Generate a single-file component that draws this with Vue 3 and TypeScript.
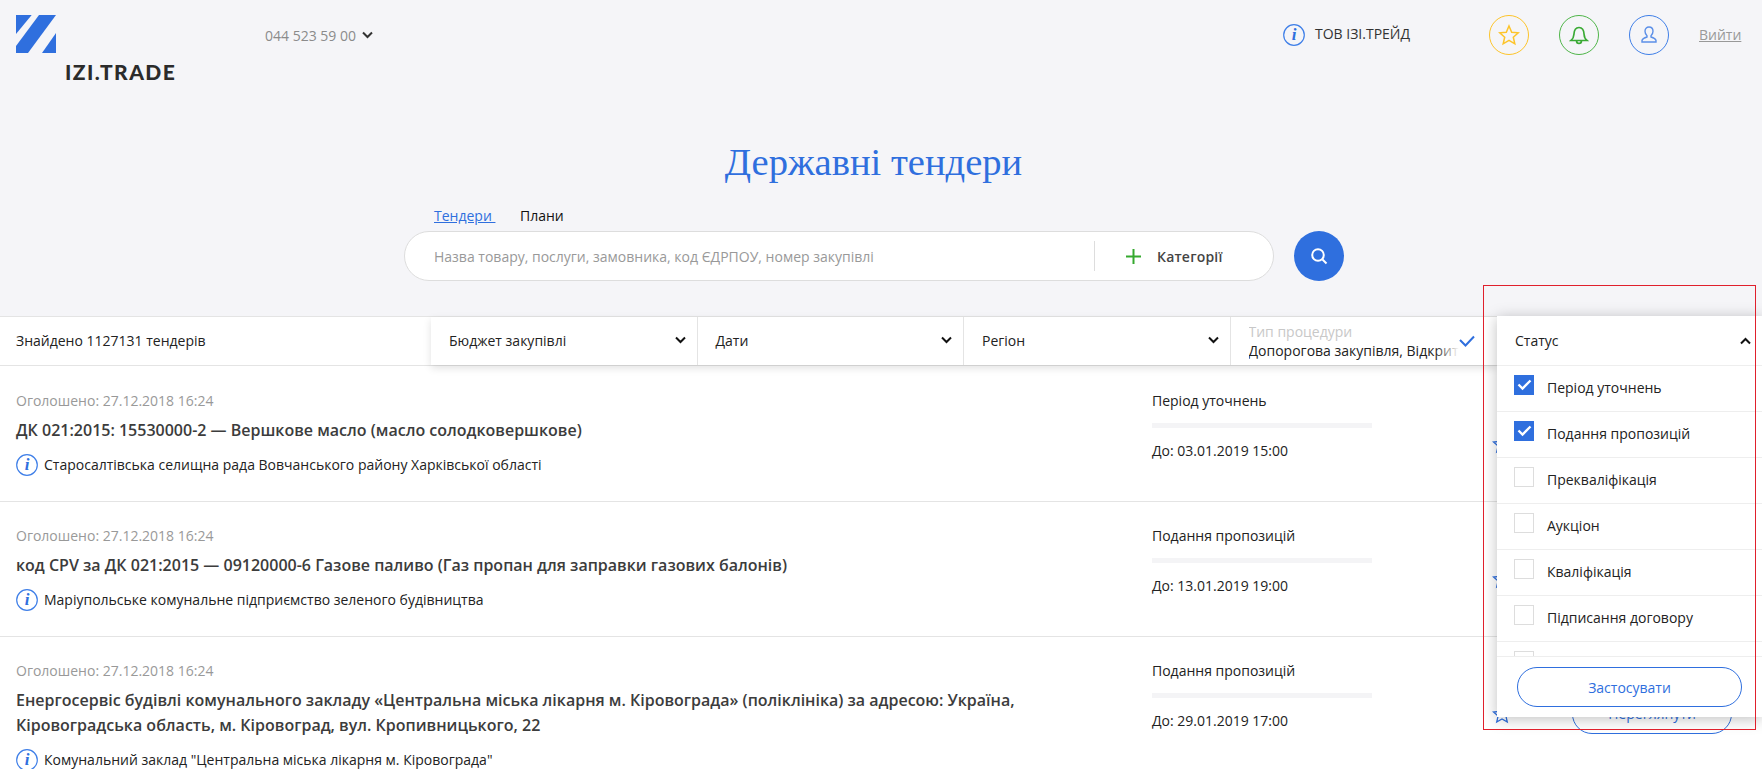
<script setup lang="ts">
interface Tender { title: string[]; org: string; status: string; until: string }
const tenders: Tender[] = [
  { title: ['ДК 021:2015: 15530000-2 — Вершкове масло (масло солодковершкове)'], org: 'Старосалтівська селищна рада Вовчанського району Харківської області', status: 'Період уточнень', until: 'До: 03.01.2019 15:00' },
  { title: ['код CPV за ДК 021:2015 — 09120000-6 Газове паливо (Газ пропан для заправки газових балонів)'], org: 'Маріупольське комунальне підприємство зеленого будівництва', status: 'Подання пропозицій', until: 'До: 13.01.2019 19:00' },
  { title: ['Енергосервіс будівлі комунального закладу «Центральна міська лікарня м. Кіровограда» (поліклініка) за адресою: Україна,', 'Кіровоградська область, м. Кіровоград, вул. Кропивницького, 22'], org: 'Комунальний заклад "Центральна міська лікарня м. Кіровограда"', status: 'Подання пропозицій', until: 'До: 29.01.2019 17:00' },
]
const filters = ['Бюджет закупівлі', 'Дати', 'Регіон']
const statuses = [
  { name: 'Період уточнень', on: true },
  { name: 'Подання пропозицій', on: true },
  { name: 'Прекваліфікація', on: false },
  { name: 'Аукціон', on: false },
  { name: 'Кваліфікація', on: false },
  { name: 'Підписання договору', on: false },
  { name: 'Завершено', on: false },
]
</script>

<template>
  <div class="page">
    <header class="hero">
      <div class="topbar">
        <div class="logo">
          <svg class="logo-mark" width="40" height="38" viewBox="0 0 40 38">
            <polygon points="0,0 15.700,0 0,19" fill="#2f6fde" />
            <polygon points="23,0 40,0 12,38 0,38 0,31" fill="#2f6fde" />
            <polygon points="40,18 40,38 26,38" fill="#2f6fde" />
          </svg>
          <div class="logo-text">IZI.TRADE</div>
        </div>
        <div class="phone">044 523 59 00
          <svg width="11" height="8" viewBox="0 0 11 8"><path d="M1 1.500l4.500 4.500 4.500-4.500" fill="none" stroke="#333" stroke-width="2" /></svg>
        </div>
        <div class="company">
          <svg class="info" width="22" height="22" viewBox="0 0 22 22"><circle cx="11" cy="11" r="10.300" fill="none" stroke="#3f7fe8" stroke-width="1.200" /><text x="11" y="16" text-anchor="middle" class="info-i">i</text></svg>
          <span class="company-name">ТОВ ІЗІ.ТРЕЙД</span>
        </div>
        <div class="round yellow">
          <svg width="22" height="22" viewBox="0 0 22 22"><path d="M11 2l2.700 6.200 6.600.6-5 4.400 1.500 6.600L11 16.400l-5.800 3.400 1.500-6.600-5-4.400 6.600-.6z" fill="none" stroke="#fdc42a" stroke-width="1.500" /></svg>
        </div>
        <div class="round green">
          <svg width="20" height="20" viewBox="0 0 20 20"><path d="M2 15.500h16c-2-1.500-2.700-3-2.900-6C14.900 5 13 2.500 10 2.500S5.100 5 4.900 9.500C4.700 12.500 4 14 2 15.500z M7.500 15.500c0 4 5 4 5 0" fill="none" stroke="#3aaa35" stroke-width="1.700" /></svg>
        </div>
        <div class="round blue">
          <svg width="20" height="20" viewBox="0 0 20 20"><path d="M10 2c2.400 0 4 1.800 4 4.300 0 2-1 3.500-2 4.400v1.300c2 .6 4.500 1.500 5 3.500v1.500H3V15.500c.5-2 3-2.900 5-3.500v-1.300c-1-.9-2-2.400-2-4.400C6 3.800 7.600 2 10 2z" fill="none" stroke="#5b8fe8" stroke-width="1.400" /></svg>
        </div>
        <a class="login">Вийти</a>
      </div>

      <h1 class="title">Державні тендери</h1>

      <div class="search-block">
        <div class="tabs"><a class="tab active">Тендери </a><a class="tab">Плани</a></div>
        <div class="search-row">
          <div class="search">
            <span class="placeholder">Назва товару, послуги, замовника, код ЄДРПОУ, номер закупівлі</span>
            <div class="cats">
              <svg width="15" height="15" viewBox="0 0 15 15"><path d="M7.500 0v15M0 7.500h15" stroke="#35a92e" stroke-width="2" /></svg>
              <span>Категорії</span>
            </div>
          </div>
          <button class="go">
            <svg width="18" height="18" viewBox="0 0 18 18"><circle cx="8" cy="8" r="5.800" fill="none" stroke="#fff" stroke-width="2" /><path d="M12.500 12.500l4 4" stroke="#fff" stroke-width="2" /></svg>
          </button>
        </div>
      </div>
    </header>

    <section class="filter-bar">
      <div class="found">Знайдено 1127131 тендерів</div>
      <div class="filters">
        <div v-for="f in filters" :key="f" class="cell">
          <span>{{ f }}</span>
          <svg width="11" height="8" viewBox="0 0 11 8"><path d="M1 1.500l4.500 4.500 4.500-4.500" fill="none" stroke="#111" stroke-width="2" /></svg>
        </div>
        <div class="cell type">
          <div class="type-text">
            <div class="type-label">Тип процедури</div>
            <div class="type-value">Допорогова закупівля, Відкриті торги</div>
          </div>
          <svg class="type-check" width="16" height="12" viewBox="0 0 16 12"><path d="M1 5l5.500 5.500L15 1.500" fill="none" stroke="#2f6fde" stroke-width="2" /></svg>
        </div>
      </div>
    </section>

    <main class="list">
      <article v-for="(t, i) in tenders" :key="i" class="row">
        <div class="main-col">
          <div class="date">Оголошено: 27.12.2018 16:24</div>
          <h2 class="row-title"><span v-for="line in t.title" :key="line" class="line">{{ line }}</span></h2>
          <div class="org">
            <svg width="22" height="22" viewBox="0 0 22 22"><circle cx="11" cy="11" r="10.300" fill="none" stroke="#3f7fe8" stroke-width="1.200" /><text x="11" y="16" text-anchor="middle" class="info-i">i</text></svg>
            <span>{{ t.org }}</span>
          </div>
        </div>
        <div class="status-col">
          <div class="status">{{ t.status }}</div>
          <div class="bar"></div>
          <div class="until">{{ t.until }}</div>
        </div>
        <div class="action-col">
          <svg class="fav" width="20" height="20" viewBox="0 0 22 22"><path d="M11 2l2.700 6.200 6.600.6-5 4.400 1.500 6.600L11 16.400l-5.800 3.400 1.500-6.600-5-4.400 6.600-.6z" fill="none" stroke="#2f6fde" stroke-width="1.400" /></svg>
          <a class="view">Переглянути</a>
        </div>
      </article>
    </main>

    <aside class="popup">
      <div class="popup-head">
        <span>Статус</span>
        <svg width="11" height="8" viewBox="0 0 11 8"><path d="M1 6.500l4.500-4.500 4.500 4.500" fill="none" stroke="#111" stroke-width="2" /></svg>
      </div>
      <div class="options">
        <label v-for="s in statuses" :key="s.name" class="option">
          <span class="box" :class="{ on: s.on }">
            <svg v-if="s.on" width="15" height="12" viewBox="0 0 15 12"><path d="M1.500 5.500l4 4 8-8" fill="none" stroke="#fff" stroke-width="2.300" /></svg>
          </span>
          <span class="option-name">{{ s.name }}</span>
        </label>
      </div>
      <div class="popup-foot"><button class="apply">Застосувати</button></div>
    </aside>

    <div class="annotation"></div>
  </div>
</template>

<style>
html, body { margin: 0; background: #fff; }
</style>

<style scoped>
* { box-sizing: border-box; }
.page {
  position: relative;
  width: 1762px;
  height: 769px;
  overflow: hidden;
  background: #fff;
  font-family: "Open Sans", "Noto Sans", sans-serif;
  font-size: 14px;
  color: #222;
}
.hero { background: #f5f5f8; height: 316px; padding-top: 15px; }
.topbar { display: flex; align-items: flex-start; height: 100px; padding-left: 16px; }
.logo { width: 249px; }
.logo-mark { display: block; }
.logo-text { margin: 6px 0 0 49px; font-family: "Lato", "Open Sans", sans-serif; font-weight: 900; font-size: 21px; line-height: 26px; letter-spacing: 1.450px; color: #2b2b2b; white-space: nowrap; }
.phone { display: flex; align-items: center; gap: 6px; height: 40px; color: #8b8b8b; width: 1018px; }
.company { display: flex; align-items: center; gap: 10px; width: 206px; height: 40px; color: #333; }
.company-name { margin-top: -3px; }
.info-i { font-family: "Liberation Serif", serif; font-style: italic; font-weight: 700; font-size: 17px; fill: #2f6fde; }
.round { width: 40px; height: 40px; margin-right: 30px; border-radius: 50%; border: 1px solid; display: flex; align-items: center; justify-content: center; }
.yellow { border-color: #fdc42a; }
.green { border-color: #4fb549; }
.blue { border-color: #3f7fe8; }
.login { line-height: 40px; color: #999; text-decoration: underline; }
.title { margin: 25px 15px 0 0; text-align: center; font-family: "Liberation Serif", serif; font-weight: 400; font-size: 38.600px; line-height: 44px; color: #2f6fde; }
.search-block { width: 940px; margin: 23px 0 0 404px; }
.tabs { display: flex; padding-left: 30px; height: 24px; line-height: 18px; }
.tab { color: #111; }
.tab.active { width: 86px; color: #2f6fde; text-decoration: underline; white-space: pre; }
.search-row { display: flex; gap: 20px; }
.search { display: flex; align-items: center; justify-content: space-between; width: 870px; height: 50px; background: #fff; border: 1px solid #ddd; border-radius: 25px; padding-left: 29px; }
.placeholder { color: #999; }
.cats { display: flex; align-items: center; gap: 16px; width: 179px; height: 30px; border-left: 1px solid #ddd; padding-left: 31px; font-weight: 600; letter-spacing: 0.200px; color: #444; }
.go { width: 50px; height: 50px; border: 0; padding: 0; border-radius: 50%; background: #2f6fde; display: flex; align-items: center; justify-content: center; }
.filter-bar { display: flex; height: 50px; border-top: 1px solid #e4e4e4; border-bottom: 1px solid #e4e4e4; background: #fff; }
.found { width: 431px; padding-left: 16px; line-height: 47px; }
.filters { display: flex; box-shadow: 0 3px 8px rgba(0, 0, 0, 0.12); width: 1066px; height: 48px; }
.cell { flex: 0 0 266.500px; display: flex; align-items: center; justify-content: space-between; padding: 0 11px 2px 18px; border-right: 1px solid #e4e4e4; }
.cell.type { position: relative; padding-right: 22px; padding-bottom: 0; overflow: hidden; border-right: 0; }
.type-text { width: 212px; overflow: hidden; white-space: nowrap; line-height: 19px; position: relative; }
.type-text::after { content: ""; position: absolute; right: 0; top: 0; bottom: 0; width: 24px; background: linear-gradient(90deg, rgba(255,255,255,0), #fff); }
.type-label { color: #c8c8c8; }
.type-value { color: #222; }
.type-check { flex: none; }
.list { background: #fff; padding-top: 1px; }
.row { display: flex; height: 135px; padding: 0 0 0 16px; border-bottom: 1px solid #e4e4e4; }
.row:last-child { height: 220px; }
.main-col { width: 1136px; padding-top: 24px; }
.date { color: #999; line-height: 20px; }
.row-title { margin: 7px 0 0; font-size: 16px; font-weight: 600; line-height: 25px; color: #3c3c3c; }
.line { display: block; }
.org { display: flex; align-items: center; gap: 6px; margin-top: 11px; line-height: 22px; color: #222; }
.status-col { width: 220px; padding-top: 24px; line-height: 20px; }
.status { color: #222; }
.bar { height: 5px; margin: 12px 0 13px; background: #f4f4f6; }
.until { color: #222; }
.action-col { display: flex; align-items: center; gap: 60px; padding: 57px 0 0 120px; height: 97px; }
.fav { flex: none; }
.view { flex: none; display: block; width: 160px; height: 40px; border: 1px solid #2f6fde; border-radius: 20px; text-align: center; line-height: 38px; color: #2f6fde; }
.popup { position: absolute; top: 316px; left: 1497px; right: 0; height: 401px; background: #fff; box-shadow: 0 2px 14px rgba(0, 0, 0, 0.25); display: flex; flex-direction: column; }
.popup-head { display: flex; align-items: center; justify-content: space-between; flex: none; height: 50px; padding: 0 11px 0 18px; border-bottom: 1px solid #eee; }
.options { flex: 1; overflow: hidden; }
.option { display: flex; align-items: flex-start; gap: 13px; height: 46px; padding: 9px 0 0 17px; border-bottom: 1px solid #eee; }
.option-name { line-height: 25px; }
.box { flex: none; width: 20px; height: 20px; border: 1px solid #ddd; display: flex; align-items: center; justify-content: center; }
.box.on { background: #2f6fde; border-color: #2f6fde; }
.popup-foot { flex: none; height: 61px; border-top: 1px solid #eee; padding: 10px 20px; }
.apply { display: block; width: 225px; height: 40px; background: #fff; border: 1px solid #2f6fde; border-radius: 20px; font: inherit; color: #2f6fde; }
.annotation { position: absolute; left: 1483px; top: 285px; width: 273px; height: 445px; border: 1px solid #e0202c; pointer-events: none; }
</style>
